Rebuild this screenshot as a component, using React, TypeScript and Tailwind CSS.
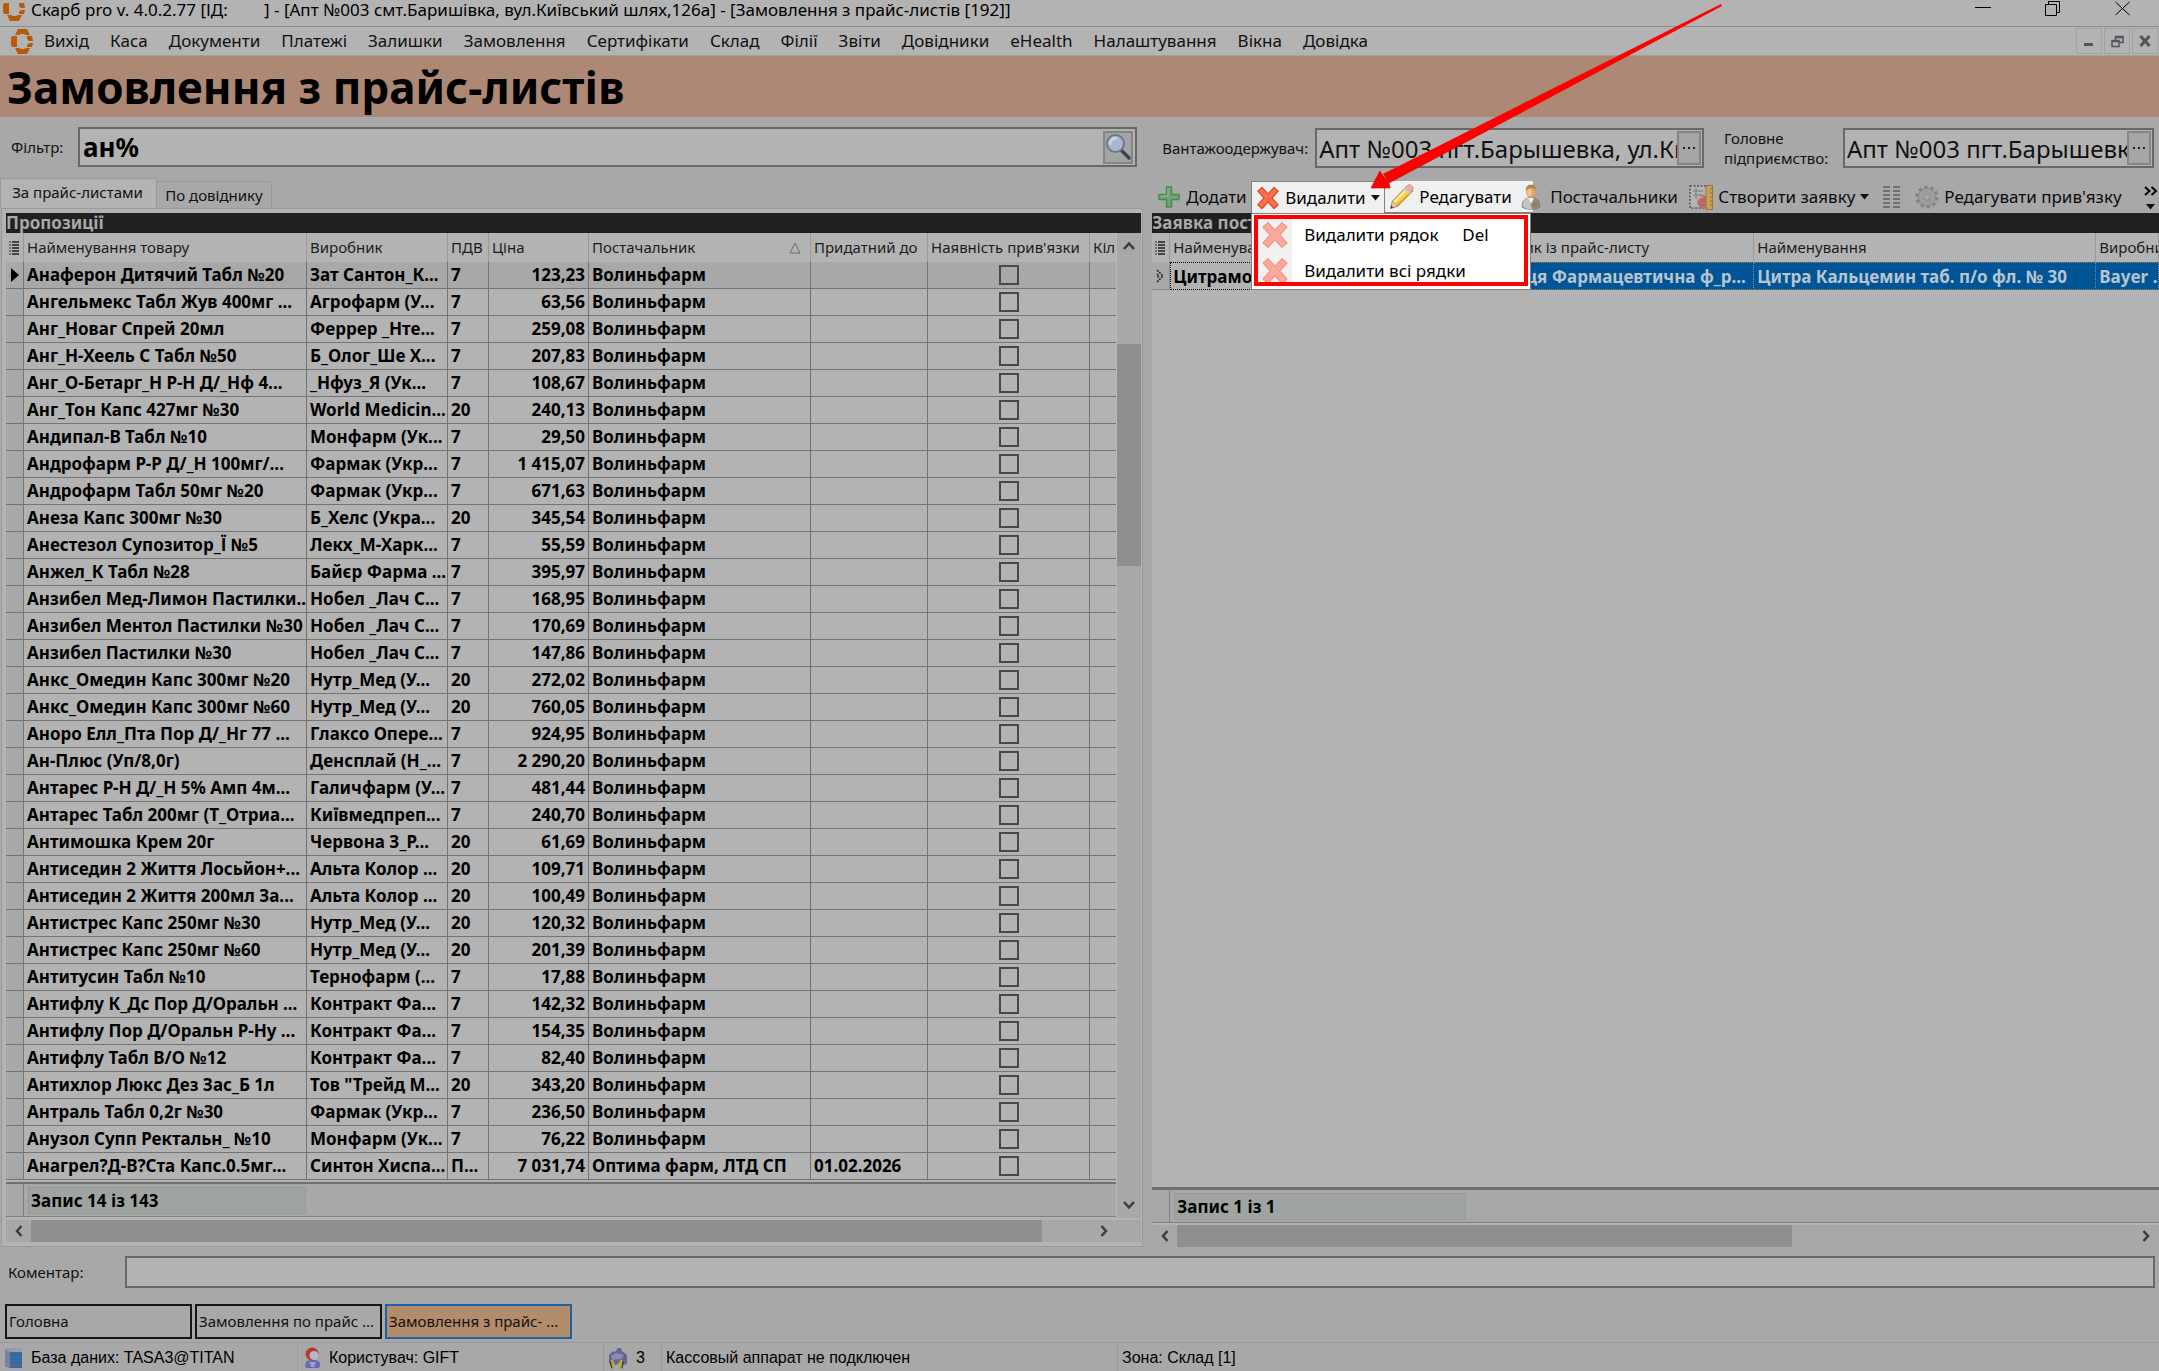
import React from 'react';

const menuItems = [
  'Вихід', 'Каса', 'Документи', 'Платежі', 'Залишки', 'Замовлення', 'Сертифікати', 'Склад',
  'Філії', 'Звіти', 'Довідники', 'eHealth', 'Налаштування', 'Вікна', 'Довідка',
];

type Row = [name: string, maker: string, vat: string, price: string, supplier?: string, date?: string];

const rows: Row[] = [
  ['Анаферон Дитячий Табл №20', 'Зат Сантон_К...', '7', '123,23'],
  ['Ангельмекс Табл Жув 400мг ...', 'Агрофарм (У...', '7', '63,56'],
  ['Анг_Новаг Спрей 20мл', 'Феррер _Нте...', '7', '259,08'],
  ['Анг_Н-Хеель С Табл №50', 'Б_Олог_Ше Х...', '7', '207,83'],
  ['Анг_О-Бетарг_Н Р-Н Д/_Нф 4...', '_Нфуз_Я (Ук...', '7', '108,67'],
  ['Анг_Тон Капс 427мг №30', 'World Medicin...', '20', '240,13'],
  ['Андипал-В Табл №10', 'Монфарм (Ук...', '7', '29,50'],
  ['Андрофарм Р-Р Д/_Н 100мг/...', 'Фармак (Укр...', '7', '1 415,07'],
  ['Андрофарм Табл 50мг №20', 'Фармак (Укр...', '7', '671,63'],
  ['Анеза Капс 300мг №30', 'Б_Хелс (Укра...', '20', '345,54'],
  ['Анестезол Супозитор_Ї №5', 'Лекх_М-Харк...', '7', '55,59'],
  ['Анжел_К Табл №28', 'Байєр Фарма ...', '7', '395,97'],
  ['Анзибел Мед-Лимон Пастилки...', 'Нобел _Лач С...', '7', '168,95'],
  ['Анзибел Ментол Пастилки №30', 'Нобел _Лач С...', '7', '170,69'],
  ['Анзибел Пастилки №30', 'Нобел _Лач С...', '7', '147,86'],
  ['Анкс_Омедин Капс 300мг №20', 'Нутр_Мед (У...', '20', '272,02'],
  ['Анкс_Омедин Капс 300мг №60', 'Нутр_Мед (У...', '20', '760,05'],
  ['Аноро Елл_Пта Пор Д/_Нг 77 ...', 'Глаксо Опере...', '7', '924,95'],
  ['Ан-Плюс (Уп/8,0г)', 'Денсплай (Н_...', '7', '2 290,20'],
  ['Антарес Р-Н Д/_Н 5% Амп 4м...', 'Галичфарм (У...', '7', '481,44'],
  ['Антарес Табл 200мг (Т_Отриа...', 'Київмедпреп...', '7', '240,70'],
  ['Антимошка Крем 20г', 'Червона З_Р...', '20', '61,69'],
  ['Антиседин 2 Життя Лосьйон+...', 'Альта Колор ...', '20', '109,71'],
  ['Антиседин 2 Життя 200мл За...', 'Альта Колор ...', '20', '100,49'],
  ['Антистрес Капс 250мг №30', 'Нутр_Мед (У...', '20', '120,32'],
  ['Антистрес Капс 250мг №60', 'Нутр_Мед (У...', '20', '201,39'],
  ['Антитусин Табл №10', 'Тернофарм (...', '7', '17,88'],
  ['Антифлу К_Дс Пор Д/Оральн ...', 'Контракт Фа...', '7', '142,32'],
  ['Антифлу Пор Д/Оральн Р-Ну ...', 'Контракт Фа...', '7', '154,35'],
  ['Антифлу Табл В/О №12', 'Контракт Фа...', '7', '82,40'],
  ['Антихлор Люкс Дез Зас_Б 1л', 'Тов "Трейд М...', '20', '343,20'],
  ['Антраль Табл 0,2г №30', 'Фармак (Укр...', '7', '236,50'],
  ['Анузол Супп Ректальн_ №10', 'Монфарм (Ук...', '7', '76,22'],
  ['Анагрел?Д-В?Ста Капс.0.5мг...', 'Синтон Хиспа...', 'П...', '7 031,74', 'Оптима фарм, ЛТД СП', '01.02.2026'],
];

function Logo({ cut = false }: { cut?: boolean }) {
  return (
    <svg
      width="22"
      height={cut ? 18 : 25}
      viewBox={cut ? '0 7 22 18' : '0 0 22 25'}
      fill="#b85a08"
      className="shrink-0"
      aria-hidden="true"
    >
      <path d="M7 0h9l3 6h-4l-2-1h-3l-2 1H4z" />
      <path d="M1 7h5v11H1L0 16V9z" />
      <path d="M16 7h5l1 5h-4l-2-2z" />
      <path d="M18 14h4l-1 4h-5v-2z" />
      <path d="M4 19h4l2 1h3l2-1h4l-3 6H7z" />
    </svg>
  );
}

function Cross({ size, faded = false }: { size: number; faded?: boolean }) {
  return (
    <svg width={size} height={size} viewBox="0 0 24 24" className="shrink-0" aria-hidden="true">
      <path
        d="M6 1.500 12 8l6-6.500 4.200 3.700L16 12l6.200 6.800L18 22.500 12 16l-6 6.500-4.200-3.700L8 12 1.800 5.200z"
        fill={faded ? '#fda898' : '#ff6f4a'}
        stroke={faded ? '#f09a8e' : '#dc4a2c'}
        strokeWidth="1.200"
        strokeLinejoin="round"
      />
    </svg>
  );
}

function Plus() {
  return (
    <svg width="22" height="22" viewBox="0 0 22 22" className="shrink-0" aria-hidden="true">
      <path d="M8.500 1h5v7.500H21v5h-7.500V21h-5v-7.500H1v-5h7.500z" fill="#6fa572" stroke="#4a8a50" strokeWidth="1.500" strokeLinejoin="round" />
      <path d="M10 2.500v7.500H2.500" fill="none" stroke="#93bd94" strokeWidth="1" />
    </svg>
  );
}

function Pencil() {
  return (
    <svg width="26" height="26" viewBox="0 0 26 26" className="shrink-0" aria-hidden="true">
      <path d="M1.500 24.500 3.500 17 18 2l6 5L9 22z" fill="#f8cf4c" stroke="#b8903a" strokeWidth="1" />
      <path d="M5 18.500 19 4" stroke="#fdeaa0" strokeWidth="2.500" />
      <path d="M8 21 22 8.500" stroke="#dfa52c" strokeWidth="1.500" />
      <path d="M1.500 24.500 3.500 17l5.500 5z" fill="#e9c9a0" stroke="#b08a60" strokeWidth=".8" />
      <path d="m1.500 24.500.7-3 2.300 2z" fill="#444" />
      <path d="m16 4 2.500-2.600c1.600-1.300 3.200-.6 4.400.4s2 2.700.7 4L21.500 9z" fill="#f0a9a4" stroke="#c98883" strokeWidth=".8" />
      <path d="m14.500 5.500 2-2 5.500 5-2 1.800z" fill="#c9c9c9" />
    </svg>
  );
}

function Person() {
  return (
    <svg width="20" height="26" viewBox="0 0 20 26" className="shrink-0" aria-hidden="true">
      <path d="M1 23c0-6 3-9.500 9-9.500S19 17 19 23c-4 3-14 3-18 0z" fill="#8c8c8c" stroke="#757575" strokeWidth=".8" />
      <path d="M1.500 22.500c0-5 2-8 6-8.700L11 25c-4 .3-7-.5-9.500-2.500z" fill="#c4c4c4" />
      <path d="m7 14 3 6 3-6z" fill="#efefef" />
      <ellipse cx="10" cy="7.500" rx="5" ry="6.500" fill="#d8a468" />
      <path d="M4.800 7C4.500 2.500 7 .7 10 .7S15.500 2.500 15.200 7c-1-2.500-3-3.500-6-3-2 .3-3.500 1-4.400 3z" fill="#b98244" />
      <ellipse cx="8.500" cy="8.500" rx="2.500" ry="3.500" fill="#efc795" />
      <rect x="12" y="18" width="4" height="5" fill="#a8793e" />
    </svg>
  );
}

function OrderSheet() {
  return (
    <svg width="24" height="25" viewBox="0 0 24 25" className="shrink-0" aria-hidden="true">
      <rect x="1" y="1" width="17" height="22" fill="#b4b4b4" stroke="#555" strokeWidth="1.500" strokeDasharray="2 1.500" />
      <path d="M4 6h10M4 10h10M7 3v11" stroke="#8b8b8b" strokeWidth="1.500" />
      <path d="M16 10.500a6.500 6.500 0 1 0 1 12.500V11z" fill="#b96a68" />
      <path d="M9 15a5 5 0 0 1 5-3" stroke="#cf9a9a" strokeWidth="1.500" fill="none" />
      <rect x="17" y=".5" width="6.500" height="24" fill="#c6a154" stroke="#98793a" strokeWidth="1" />
      <path d="M21 4h2M21 8h2M21 12h2M21 16h2M21 20h2" stroke="#8c7036" strokeWidth="1" />
    </svg>
  );
}

function ListColumns() {
  return (
    <svg width="20" height="24" viewBox="0 0 20 24" className="shrink-0" aria-hidden="true">
      <path d="M1 2h7M1 6h7M1 10h7M1 14h7M1 18h7M1 22h7M11 2h7M11 6h7M11 10h7M11 14h7M11 18h7M11 22h7" stroke="#707070" strokeWidth="2" />
    </svg>
  );
}

function Gear() {
  return (
    <svg width="24" height="24" viewBox="0 0 24 24" className="shrink-0" aria-hidden="true">
      <circle cx="12" cy="12" r="9.800" fill="none" stroke="#858585" strokeWidth="3.600" strokeDasharray="3.400 2.750" />
      <circle cx="12" cy="12" r="7" fill="none" stroke="#858585" strokeWidth="4" />
      <circle cx="12" cy="12" r="6.800" fill="none" stroke="#a3a3a3" strokeWidth="2.500" />
      <circle cx="12" cy="12" r="3.400" fill="#a8a8a8" stroke="#858585" strokeWidth="1" />
    </svg>
  );
}

function Magnifier() {
  return (
    <svg width="26" height="28" viewBox="0 0 26 28" className="shrink-0" aria-hidden="true">
      <path d="m16 17 8 8" stroke="#3f4347" strokeWidth="3.500" strokeLinecap="round" />
      <circle cx="10.500" cy="10.500" r="8.500" fill="#a9b9cd" stroke="#6f7986" strokeWidth="2" />
      <path d="M5 11a6 6 0 0 1 6-6" stroke="#cdd7e2" strokeWidth="2.500" fill="none" strokeLinecap="round" />
    </svg>
  );
}

function Database() {
  return (
    <svg width="19" height="22" viewBox="0 0 19 22" className="shrink-0" aria-hidden="true">
      <path d="M1 3v16l5 2h12V3l-4-2H4z" fill="#4f6690" />
      <path d="M1 3v16l5 2V5z" fill="#7b7fa0" />
      <path d="M1 3 4 1h10l4 2v2H6z" fill="#9a9ab0" />
      <path d="M6 8h12M6 12h12M6 16h12" stroke="#1f6fb5" strokeWidth="1.800" />
    </svg>
  );
}

function UserBadge() {
  return (
    <svg width="17" height="22" viewBox="0 0 17 22" className="shrink-0" aria-hidden="true">
      <path d="M2 21c-2-4 0-8 5-8h4c5 0 6 4 4 8z" fill="#6a6aae" />
      <circle cx="8" cy="7" r="6.500" fill="#b03c2c" />
      <circle cx="10" cy="8.500" r="4.500" fill="#b9b4c8" />
      <path d="M5 15h7l-2 5H7z" fill="#9c9cc8" />
    </svg>
  );
}

function Device() {
  return (
    <svg width="20" height="21" viewBox="0 0 20 21" className="shrink-0" aria-hidden="true">
      <path d="M1 7 5 3l2 1 3-4h3l1 3 5 4v9l-4 1-3-3-5 4-6-4z" fill="#66668e" />
      <path d="m3 8 5-3 8 2-3 4-9 1z" fill="#8b8bb0" />
      <path d="m4 13 3 6M13 13l-1 6" stroke="#c0a83c" strokeWidth="2.500" strokeLinecap="round" />
      <path d="m2 14 2 6M15 14l-1 6" stroke="#333" strokeWidth="1.200" strokeLinecap="round" />
    </svg>
  );
}

function Chevron({ dir }: { dir: 'up' | 'down' | 'left' | 'right' }) {
  const d = {
    up: 'M2 9 7 3.500 12 9',
    down: 'M2 4 7 9.500 12 4',
    left: 'M9.500 2 5 7l4.500 5',
    right: 'M4.500 2 9 7l-4.500 5',
  }[dir];
  return (
    <svg width="14" height="14" viewBox="0 0 14 14" aria-hidden="true">
      <path d={d} fill="none" stroke="#3c3c3c" strokeWidth="2.500" />
    </svg>
  );
}

function Caret() {
  return (
    <svg width="9" height="6" viewBox="0 0 9 6" className="shrink-0" aria-hidden="true">
      <path d="M0 0h9L4.500 5.500z" fill="#111" />
    </svg>
  );
}

function GridMark() {
  return (
    <svg width="11" height="14" viewBox="0 0 11 14" className="mx-auto" aria-hidden="true">
      <path d="M0 1h2M0 4h2M0 7h2M0 10h2M0 13h2" stroke="#333" strokeWidth="1" />
      <path d="M3 1h7M3 4h7M3 7h7M3 10h7M3 13h7" stroke="#222" strokeWidth="1.500" />
    </svg>
  );
}

function HScroll({ thumb }: { thumb: string }) {
  return (
    <div className="flex h-[22px] items-stretch bg-[#a8a8a8]">
      <button aria-label="Прокрутити ліворуч" className="flex w-[25px] items-center justify-center">
        <Chevron dir="left" />
      </button>
      <div className="flex-1">
        <div className="h-full bg-[#8f8f8f]" style={{ width: thumb }} />
      </div>
      <button aria-label="Прокрутити праворуч" className="flex w-[25px] items-center justify-center">
        <Chevron dir="right" />
      </button>
    </div>
  );
}

const headCell = 'h-[29px] overflow-hidden border-r border-[#9a9a9a] p-0 pl-[3px] text-left text-[15px] font-normal text-[#1c1c1c]';
const cell = 'overflow-hidden border-r border-b border-[#747474] p-0 pl-[3px]';

function OffersTable() {
  return (
    <table className="w-full table-fixed border-separate border-spacing-0 whitespace-nowrap bg-[#b3b3b3]">
      <colgroup>
        <col className="w-[18px]" />
        <col className="w-[283px]" />
        <col className="w-[141px]" />
        <col className="w-[41px]" />
        <col className="w-[100px]" />
        <col className="w-[222px]" />
        <col className="w-[117px]" />
        <col className="w-[162px]" />
        <col />
      </colgroup>
      <thead>
        <tr>
          <th className="border-r border-[#9a9a9a] p-0" aria-label="Позначка"><GridMark /></th>
          <th className={headCell}>Найменування товару</th>
          <th className={headCell}>Виробник</th>
          <th className={headCell}>ПДВ</th>
          <th className={headCell}>Ціна</th>
          <th className={headCell}>
            <span className="flex items-center justify-between pr-[9px]">
              Постачальник
              <svg width="12" height="12" viewBox="0 0 12 12" aria-hidden="true">
                <path d="M6 1 11 11H1z" fill="none" stroke="#6c6c6c" />
              </svg>
            </span>
          </th>
          <th className={headCell}>Придатний до</th>
          <th className={headCell}>Наявність прив'язки</th>
          <th className="overflow-hidden p-0 pl-[3px] text-left text-[15px] font-normal text-[#1c1c1c]">Кіл</th>
        </tr>
      </thead>
      <tbody className="text-[17px] leading-[26px] font-bold text-black">
        {rows.map(([name, maker, vat, price, supplier = 'Волиньфарм', date = ''], i) => (
          <tr key={name} className={i === 0 ? 'h-[27px] bg-[#a8a8a8]' : 'h-[27px]'}>
            <td className="border-r border-b border-[#747474] bg-[#a8a8a8] p-0">
              {i === 0 && (
                <svg width="8" height="14" viewBox="0 0 8 14" className="mx-auto" aria-label="Поточний рядок">
                  <path d="M0 0 8 7 0 14z" fill="#000" />
                </svg>
              )}
            </td>
            <td className={cell}>{name}</td>
            <td className={cell}>{maker}</td>
            <td className={cell}>{vat}</td>
            <td className="overflow-hidden border-r border-b border-[#747474] p-0 pr-[3px] text-right">{price}</td>
            <td className={cell}>{supplier}</td>
            <td className={cell}>{date}</td>
            <td className="border-r border-b border-[#747474] p-0">
              <input
                type="checkbox"
                aria-label={`Наявність прив'язки: ${name}`}
                className="mx-auto block size-5 appearance-none border-2 border-[#484848]"
              />
            </td>
            <td className="border-b border-[#747474]" />
          </tr>
        ))}
      </tbody>
    </table>
  );
}

function RecordFooter({ text, width }: { text: string; width: string }) {
  return (
    <div className="flex h-[33px] border-b border-[#808080] bg-[#a8a8a8]">
      <div className="w-[18px] border-r border-[#808080]" />
      <div className="ml-1 py-[3px]" style={{ width }}>
        <div className="flex h-[27px] items-center border border-[#979997] bg-[#a0a4a1] pl-[2px] text-[17px] font-bold text-black">{text}</div>
      </div>
    </div>
  );
}

function LeftPane() {
  return (
    <section className="flex w-[53%] flex-col pt-[10px]">
      <div className="flex h-10 items-center pr-[7px]">
        <label htmlFor="filter" className="w-[78px] shrink-0 pl-[11px] text-[15px]">Фільтр:</label>
        <div className="flex h-full flex-1 items-center border-2 border-[#686868] bg-[#b3b3b3] pr-[2px]">
          <input id="filter" defaultValue="ан%" className="h-full min-w-0 flex-1 bg-transparent pl-[3px] text-[26px] font-bold text-black outline-none" />
          <button aria-label="Пошук" className="flex h-[33px] w-[30px] items-center justify-center border-2 border-[#858585] bg-[#a4a4a4]">
            <Magnifier />
          </button>
        </div>
      </div>
      <div role="tablist" className="mt-[11px] flex h-[30px] items-end text-[15px]">
        <button role="tab" aria-selected="true" className="h-[30px] w-[157px] border-x border-t border-[#9a9a9a] bg-[#b3b3b3] pr-[2px] pb-[2px]">За прайс-листами</button>
        <button role="tab" aria-selected="false" className="h-[27px] w-[115px] border-t border-r border-[#9a9a9a]">По довіднику</button>
      </div>
      <div className="mr-[1px] ml-[1px] flex flex-1 flex-col border border-[#9a9a9a] bg-[#b3b3b3] pt-1 pr-[1px] pb-1 pl-1">
        <h2 className="h-5 bg-[#202020] text-[17px] leading-5 font-bold text-[#a9a9a9]">Пропозиції</h2>
        <div className="flex flex-1">
          <div className="flex min-w-0 flex-1 flex-col">
            <OffersTable />
            <div className="h-[2px]" />
            <div className="h-[2px] bg-[#707070]" />
            <RecordFooter text="Запис 14 із 143" width="278px" />
          </div>
          <div className="flex w-[25px] flex-col border-l border-[#b8b8b8] bg-[#a8a8a8]">
            <button aria-label="Прокрутити вгору" className="flex h-7 items-center justify-center"><Chevron dir="up" /></button>
            <div className="flex flex-1 flex-col pt-[83px]">
              <div className="h-[222px] bg-[#8f8f8f]" />
            </div>
            <button aria-label="Прокрутити вниз" className="flex h-[26px] items-center justify-center"><Chevron dir="down" /></button>
          </div>
        </div>
        <div className="mt-[2px] bg-[#a8a8a8] pr-[25px]">
          <HScroll thumb="95.4%" />
        </div>
      </div>
    </section>
  );
}

function Lookup({ id, value }: { id: string; value: string }) {
  return (
    <div className="flex h-10 min-w-0 flex-1 items-center border-2 border-[#686868] bg-[#b3b3b3] pr-[1px]">
      <input id={id} defaultValue={value} className="h-full min-w-0 flex-1 bg-transparent pl-[2px] text-[24px] text-[#111] outline-none" />
      <button aria-label="Обрати" className="flex h-[34px] w-6 shrink-0 items-center justify-center border-2 border-[#858585] bg-[#a6a6a6]">
        <svg width="12" height="3" viewBox="0 0 12 3" aria-hidden="true">
          <path d="M0 0h2v2H0zM5 0h2v2H5zM10 0h2v2h-2z" fill="#222" />
        </svg>
      </button>
    </div>
  );
}

function DeleteMenu() {
  return (
    <div role="menu" className="absolute top-full left-0 z-20 w-[280px] border border-[#808080] bg-white px-[2px] pt-[1px] pb-[3px] text-[17px] text-black">
      <div className="h-[71px] overflow-hidden border-4 border-[#ff0000] bg-white">
        <button role="menuitem" className="flex h-8 w-full items-center">
          <span className="flex h-full w-[34px] items-center justify-center bg-[#f1f1f1]"><Cross size={28} faded /></span>
          <span className="ml-3 w-[158px] text-left">Видалити рядок</span>
          <span>Del</span>
        </button>
        <button role="menuitem" className="flex h-10 w-full items-center">
          <span className="flex h-full w-[34px] items-center justify-center bg-[#f1f1f1]"><Cross size={28} faded /></span>
          <span className="ml-3">Видалити всі рядки</span>
        </button>
      </div>
    </div>
  );
}

function PointerArrow() {
  return (
    <svg width="352" height="185" viewBox="0 0 352 185" className="pointer-events-none absolute top-[-177px] left-[120px] z-30" aria-hidden="true">
      <path d="M350 2 17 180l-3-6z" fill="#5a1010" opacity=".5" />
      <path d="M350 0 351 2 18 179l-6-9z" fill="#ff0000" />
      <path d="M0 184 9 167l3 5 6 7 1 5z" fill="#ff0000" stroke="#c00000" strokeWidth=".6" />
    </svg>
  );
}

function Toolbar() {
  return (
    <div role="toolbar" className="mt-[13px] flex h-8 items-stretch pl-[14px] text-[17px] whitespace-nowrap text-[#0c0c0c]">
      <button className="flex w-[93px] items-center gap-[6px]"><Plus />Додати</button>
      <div className="relative flex w-[282px] bg-[#f0f0f0] text-black">
        <button className="flex w-[134px] items-center gap-[5px] border-t border-r border-l border-[#808080] pl-1">
          <Cross size={24} />Видалити<Caret />
        </button>
        <button className="flex flex-1 items-center gap-[4px] border-b border-[#808080] pl-1"><Pencil />Редагувати</button>
        <DeleteMenu />
        <PointerArrow />
      </div>
      <button className="relative -ml-3 flex w-[167px] items-center gap-[9px]"><Person />Постачальники</button>
      <button className="flex w-[194px] items-center gap-[5px] pl-[1px]"><OrderSheet />Створити заявку<Caret /></button>
      <button aria-label="Колонки" className="flex w-[33px] items-center"><ListColumns /></button>
      <button className="flex items-center gap-[5px]"><Gear />Редагувати прив'язку</button>
      <button aria-label="Більше" className="ml-auto flex w-4 flex-col items-center gap-2 pt-[5px]">
        <svg width="14" height="10" viewBox="0 0 14 10" aria-hidden="true">
          <path d="m1 1 4.500 4L1 9M7.500 1 12 5 7.500 9" fill="none" stroke="#000" strokeWidth="2" />
        </svg>
        <Caret />
      </button>
    </div>
  );
}

function RightPane() {
  const selected = 'overflow-hidden border-y border-dotted border-y-[#a67a50] border-r border-r-[#7890a8] bg-[#005596] p-0 pl-[3px] text-[#b9c4cf]';
  return (
    <section className="flex w-[47%] flex-col pt-[11px]">
      <div className="flex items-center pr-[5px] text-[15px] leading-5">
        <label htmlFor="receiver" className="w-[171px] shrink-0 pl-[18px] whitespace-nowrap">Вантажоодержувач:</label>
        <Lookup id="receiver" value="Апт №003 пгт.Барышевка, ул.Киевский шлях,126а" />
        <label htmlFor="head" className="w-[139px] shrink-0 pl-5">Головне<br />підприємство:</label>
        <div className="flex w-[311px]">
          <Lookup id="head" value="Апт №003 пгт.Барышевка, ул.Киевский шлях,126а" />
        </div>
      </div>
      <Toolbar />
      <div className="ml-2 flex flex-1 flex-col bg-[#b3b3b3]">
        <h2 className="h-5 bg-[#202020] text-[17px] leading-5 font-bold text-[#a9a9a9]">Заявка постачальнику</h2>
        <table className="w-full table-fixed border-separate border-spacing-0 whitespace-nowrap">
          <colgroup>
            <col className="w-[18px]" />
            <col className="w-[296px]" />
            <col className="w-[288px]" />
            <col className="w-[342px]" />
            <col />
          </colgroup>
          <thead>
            <tr>
              <th className="border-r border-[#9a9a9a] p-0" aria-label="Позначка"><GridMark /></th>
              <th className={headCell}>Найменування</th>
              <th className={headCell}>Виробник із прайс-листу</th>
              <th className={headCell}>Найменування</th>
              <th className={headCell}>Виробник</th>
            </tr>
          </thead>
          <tbody className="text-[17px] leading-[25px] font-bold">
            <tr className="h-7">
              <td className="border-r border-b border-[#8a8a8a] bg-[#a8a8a8] p-0">
                <svg width="9" height="14" viewBox="0 0 9 14" className="mx-auto" aria-label="Поточний рядок">
                  <path d="m1 1 6 6-6 6M1 5l2 2-2 2" fill="none" stroke="#222" strokeWidth="1.500" strokeDasharray="2 1" />
                </svg>
              </td>
              <td className="overflow-hidden border border-dotted border-black p-0 pl-[2px] text-black">Цитрамон</td>
              <td className={selected}>Дарниця Фармацевтична ф_р...</td>
              <td className={selected}>Цитра Кальцемин таб. п/о фл. № 30</td>
              <td className={selected}>Bayer ...</td>
            </tr>
          </tbody>
        </table>
        <div className="flex-1" />
        <div className="h-[3px] bg-[#707070]" />
        <RecordFooter text="Запис 1 із 1" width="292px" />
        <div className="mt-[2px]">
          <HScroll thumb="64.3%" />
        </div>
      </div>
    </section>
  );
}

const mdiButton = 'flex h-[26px] w-[26px] items-center justify-center border border-[#a2a2a2]';

export default function App() {
  return (
    <div className="flex min-h-screen flex-col overflow-x-hidden bg-[#a8a8a8] font-['Noto_Sans',sans-serif] text-[#111]">
      <header className="flex h-[27px] items-start border-b border-[#8c8c8c] bg-[#b3b3b3] pr-7 pl-[3px]">
        <span className="pt-[3px]"><Logo cut /></span>
        <p className="ml-[6px] flex text-[17px] leading-5 whitespace-nowrap text-black">
          <span className="w-[233px]">Скарб pro v. 4.0.2.77 [ІД:</span>
          <span>] - [Апт №003 смт.Баришівка, вул.Київський шлях,126а] - [Замовлення з прайс-листів [192]]</span>
        </p>
        <div className="ml-auto flex gap-[54px] pt-[1px]">
          <button aria-label="Згорнути">
            <svg width="16" height="15" viewBox="0 0 16 15"><path d="M0 6.500h16" stroke="#000" /></svg>
          </button>
          <button aria-label="Відновити">
            <svg width="16" height="15" viewBox="0 0 16 15" fill="none" stroke="#000">
              <path d="M.5 3.500h11v11H.5zM3.500 3.500v-3h11v11h-3" />
            </svg>
          </button>
          <button aria-label="Закрити">
            <svg width="16" height="15" viewBox="0 0 16 15"><path d="m.5 1 14 13M14.500 1l-14 13" stroke="#000" /></svg>
          </button>
        </div>
      </header>

      <nav className="flex h-[29px] items-center border-b border-[#a0a0a0] bg-[#b3b3b3] pl-[11px] text-[17px] whitespace-nowrap">
        <Logo />
        <ul className="ml-[11px] flex gap-[21px]">
          {menuItems.map((item) => (
            <li key={item}><button>{item}</button></li>
          ))}
        </ul>
        <div className="ml-auto flex gap-[2px] pr-[1px]">
          <button aria-label="Згорнути вікно" className={mdiButton}>
            <svg width="12" height="12" viewBox="0 0 12 12"><path d="M1 9.500h9" stroke="#50565e" strokeWidth="3" /></svg>
          </button>
          <button aria-label="Відновити вікно" className={mdiButton}>
            <svg width="13" height="13" viewBox="0 0 13 13" fill="none" stroke="#50565e" strokeWidth="1.500">
              <path d="M1 5.500h7v6H1zM1 6.500h7M4.500 5V1.500h7.500v6H8.500M4.500 2.500H12" />
            </svg>
          </button>
          <button aria-label="Закрити вікно" className={mdiButton}>
            <svg width="12" height="12" viewBox="0 0 12 12"><path d="m1.500 1 9 10M10.500 1l-9 10" stroke="#50565e" strokeWidth="3" /></svg>
          </button>
        </div>
      </nav>

      <h1 className="h-[61px] bg-[#ad8975] pl-[7px] text-[44px] leading-[62px] font-bold text-black">Замовлення з прайс-листів</h1>

      <main className="flex flex-1">
        <LeftPane />
        <RightPane />
      </main>

      <div className="mt-[9px] flex items-center pr-1 text-[15px]">
        <label htmlFor="comment" className="w-[125px] pl-2">Коментар:</label>
        <input id="comment" className="h-8 flex-1 border-2 border-[#686868] bg-[#b3b3b3] px-1 outline-none" />
      </div>

      <div className="mt-4 flex gap-[3px] pl-[5px] text-[15px] whitespace-nowrap">
        <button className="h-[35px] w-[187px] overflow-hidden border-2 border-[#161616] pl-[2px] text-left">Головна</button>
        <button className="h-[35px] w-[187px] overflow-hidden border-2 border-[#161616] pl-[2px] text-left">Замовлення по прайс ...</button>
        <button className="h-[35px] w-[187px] overflow-hidden border-2 border-[#1a64a4] bg-[#b38c6b] pl-[2px] text-left">Замовлення з прайс- ...</button>
      </div>

      <footer className="mt-[3px] flex h-[29px] items-center border-t border-[#999] pt-[2px] pl-1 font-['Liberation_Sans',sans-serif] text-[16px] whitespace-nowrap text-black">
        <div className="flex h-[26px] w-[294px] items-center gap-2 border-r border-[#999]"><Database />База даних: TASA3@TITAN</div>
        <div className="flex h-[26px] w-[306px] items-center gap-2 border-r border-[#999] pl-[6px]"><UserBadge />Користувач: GIFT</div>
        <div className="flex h-[26px] w-[58px] items-center gap-2 border-r border-[#999] pl-1"><Device />3</div>
        <div className="flex h-[26px] w-[456px] items-center border-r border-[#999] pl-1">Кассовый аппарат не подключен</div>
        <div className="pl-1">Зона: Склад [1]</div>
      </footer>
    </div>
  );
}
